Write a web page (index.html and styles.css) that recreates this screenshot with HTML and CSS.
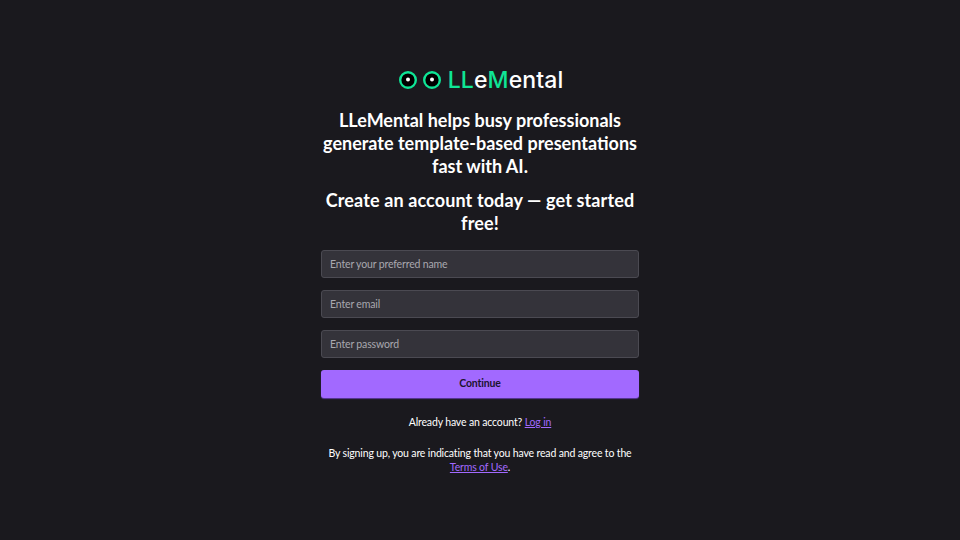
FILE: index.html
```html
<!DOCTYPE html>
<html lang="en">
<head>
    <meta charset="UTF-8">
    <meta name="viewport" content="width=device-width, initial-scale=1.0">
    <title>LLeMental</title>
    <link rel="stylesheet" href="styles.css">
</head>
<body>

<main class="signup">
    <div class="logo">
        <svg class="eyes" width="44" height="20" viewBox="0 0 44 20">
            <circle cx="9" cy="10" r="7.8" fill="#000" stroke="#0fe596" stroke-width="2.4"/>
            <circle cx="9" cy="9.5" r="2" fill="#fff"/>
            <circle cx="33" cy="10" r="7.8" fill="#000" stroke="#0fe596" stroke-width="2.4"/>
            <circle cx="33" cy="9.5" r="2" fill="#fff"/>
        </svg>
        <span class="logo-text"><span class="green">LL</span>e<span class="green">M</span>ental</span>
    </div>

    <h1>LLeMental helps busy professionals generate template-based presentations fast with AI.</h1>
    <h2>Create an account today — get started free!</h2>

    <form class="form">
        <input type="text" placeholder="Enter your preferred name">
        <input type="email" placeholder="Enter email">
        <input type="password" placeholder="Enter password">
        <button type="button">Continue</button>
    </form>

    <p class="login">Already have an account? <a href="#">Log in</a></p>
    <p class="terms">By signing up, you are indicating that you have read and agree to the <a href="#">Terms of Use</a>.</p>
</main>

</body>
</html>
```

FILE: styles.css
```css
* {
    box-sizing: border-box;
}
body {
    margin: 0;
    background-color: #1a191e;
    color: #fff;
    font-family: Lato, "Noto Sans", sans-serif;
}
.signup {
    width: 318px;
    margin: 0 auto;
    padding-top: 68px;
    text-align: center;
}
.logo {
    display: flex;
    justify-content: center;
    align-items: center;
    gap: 5px;
    height: 24px;
    margin-bottom: 17px;
    margin-left: 2px;
}
.logo-text {
    font-family: Inter, sans-serif;
    font-size: 23px;
    font-weight: 500;
    letter-spacing: 0.1px;
}
.green {
    color: #0fe596;
}
h1, h2 {
    margin: 0;
    font-size: 18px;
    line-height: 23px;
    font-weight: 700;
}
h1 {
    margin-bottom: 11px;
}
h2 {
    line-height: 22.5px;
    letter-spacing: 0.12px;
    margin-bottom: 16px;
}
.form {
    display: flex;
    flex-direction: column;
    gap: 12px;
}
.form input {
    width: 100%;
    height: 28px;
    padding: 0 8px 1px;
    background-color: #34333a;
    border: 1px solid #4b4a52;
    border-radius: 3px;
    color: #fff;
    font-family: inherit;
    font-size: 10.5px;
    letter-spacing: -0.15px;
    outline: none;
}
.form input::placeholder {
    color: #a9a8af;
    opacity: 1;
}
.form button {
    height: 28px;
    padding: 0 0 2px;
    background-color: #a269ff;
    border: none;
    border-radius: 3px;
    box-shadow: 0 1px 1px #5b3a99;
    color: #1c1430;
    font-family: inherit;
    font-size: 10.5px;
    font-weight: 700;
    letter-spacing: -0.15px;
}
p {
    margin: 0;
    font-size: 10.5px;
    line-height: 14px;
    letter-spacing: -0.15px;
}
a {
    color: #a269ff;
}
.login {
    margin-top: 17px;
}
.terms {
    margin-top: 17px;
}
```
